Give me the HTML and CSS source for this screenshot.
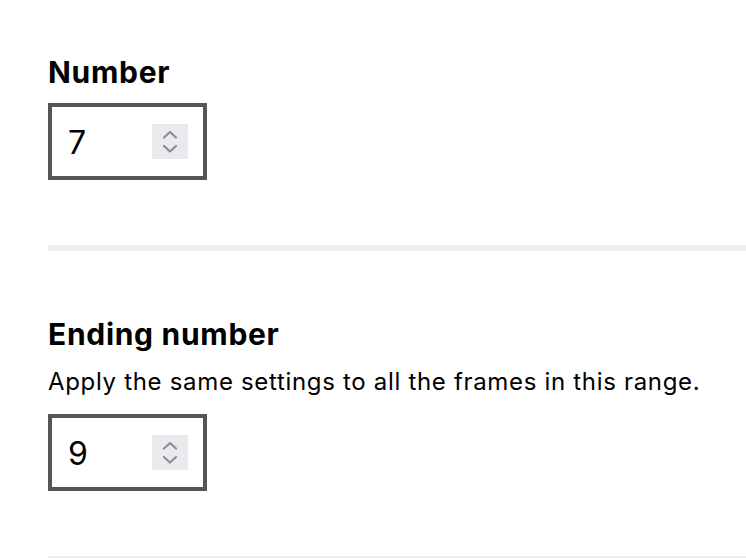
FILE: index.html
```html
<!DOCTYPE html>
<html>
<head>
    <title>Frame settings</title>
    <link rel="stylesheet" href="styles.css">
</head>
<body>
    <div class="form">
        <div class="field">
            <h3>Number</h3>
            <div class="number-input">
                <span class="value">7</span>
                <span class="spinner">
                    <svg width="36" height="35" viewBox="0 0 36 35">
                        <path d="M12 13.5 L18 8 L24 13.5" />
                        <path d="M12 22 L18 27.5 L24 22" />
                    </svg>
                </span>
            </div>
        </div>

        <div class="field">
            <h3>Ending number</h3>
            <p class="help-text">Apply the same settings to all the frames in this range.</p>
            <div class="number-input">
                <span class="value">9</span>
                <span class="spinner">
                    <svg width="36" height="35" viewBox="0 0 36 35">
                        <path d="M12 13.5 L18 8 L24 13.5" />
                        <path d="M12 22 L18 27.5 L24 22" />
                    </svg>
                </span>
            </div>
        </div>
    </div>
</body>
</html>
```

FILE: styles.css
```css
body {
    margin: 0;
    padding: 0 0 0 48px;
    font-family: Inter, "Noto Sans", sans-serif;
    color: #000;
    background: #fff;
}
.form {
    display: flex;
    flex-direction: column;
}
.field {
    padding: 66px 0 65px 0;
    border-bottom: 6px solid #eeeeee;
}
.field:first-child {
    padding-top: 55px;
}
h3 {
    margin: 0 0 14px 0;
    font-size: 30px;
    line-height: 34px;
    font-weight: 700;
    letter-spacing: 0.7px;
}
.help-text {
    margin: 16px 0 17px 0;
    font-size: 24px;
    line-height: 30px;
    letter-spacing: 0.68px;
}
.field h3 + .help-text {
    margin-top: -14px;
    padding-top: 16px;
}
.number-input {
    display: flex;
    align-items: center;
    justify-content: space-between;
    box-sizing: border-box;
    width: 159px;
    height: 77px;
    padding: 0 15px 0 16px;
    border: 4px solid #555555;
    background: #fff;
}
.value {
    font-size: 32px;
    line-height: 40px;
    padding-top: 2px;
}
.spinner {
    display: block;
    width: 36px;
    height: 35px;
    background: #e9e9ee;
}
.spinner svg {
    display: block;
}
.spinner path {
    fill: none;
    stroke: #8e8e93;
    stroke-width: 2.3;
    stroke-linecap: round;
    stroke-linejoin: round;
}
```
